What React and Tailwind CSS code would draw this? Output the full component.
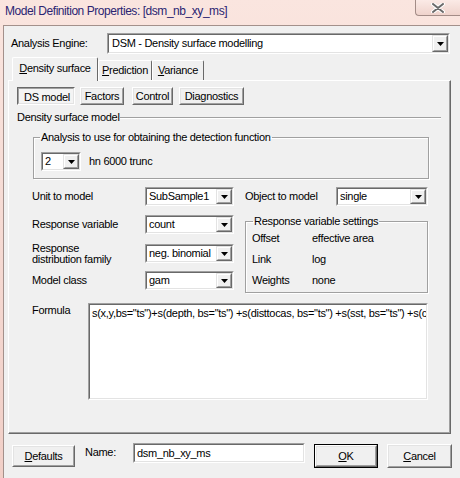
import React from "react";

const Sunken = ({ className = "", inner = "", children }) => (
  <div className={`border border-t-[#a0a0a0] border-l-[#a0a0a0] border-b-white border-r-white ${className}`}>
    <div className={`h-full border border-t-[#696969] border-l-[#696969] border-b-[#e3e3e3] border-r-[#e3e3e3] bg-white ${inner}`}>
      {children}
    </div>
  </div>
);

const Arrow = () => (
  <div className="h-full w-[16px] shrink-0 border border-t-[#e3e3e3] border-l-[#e3e3e3] border-b-[#696969] border-r-[#696969]">
    <div className="h-full border border-t-white border-l-white border-b-[#a0a0a0] border-r-[#a0a0a0] bg-[#f0f0f0] flex items-center justify-center">
      <svg width="7" height="4" viewBox="0 0 7 4">
        <polygon points="0,0 7,0 3.5,4" fill="#000" />
      </svg>
    </div>
  </div>
);

const Select = ({ className = "", value, textClass = "" }) => (
  <Sunken className={className} inner="flex items-stretch">
    <div className={`flex-1 flex items-center pl-[2px] leading-[13px] whitespace-nowrap overflow-hidden ${textClass}`}>{value}</div>
    <Arrow />
  </Sunken>
);

const Btn = ({ className = "", pressed = false, children }) =>
  pressed ? (
    <div className={`border border-t-[#696969] border-l-[#696969] border-b-white border-r-white ${className}`}>
      <div className="h-full border border-t-[#a0a0a0] border-l-[#a0a0a0] border-b-[#e3e3e3] border-r-[#e3e3e3] bg-[#f4f4f4] flex items-center justify-center pt-[2px] pl-[2px] leading-[13px]">
        {children}
      </div>
    </div>
  ) : (
    <div className={`border border-t-white border-l-white border-b-[#696969] border-r-[#696969] ${className}`}>
      <div className="h-full border border-t-[#e3e3e3] border-l-[#e3e3e3] border-b-[#a0a0a0] border-r-[#a0a0a0] bg-[#f0f0f0] flex items-center justify-center leading-[13px]">
        {children}
      </div>
    </div>
  );

export default function App() {
  return (
    <div className="w-[460px] h-[478px] overflow-hidden bg-gradient-to-b from-[#fae5df] to-[#f1cfc7] font-['Liberation_Sans',Arial,sans-serif] text-[11px] tracking-[-0.3px] text-black flex flex-col">
      {/* Title bar */}
      <div className="h-[25px] shrink-0 flex items-start">
        <div className="pl-[5px] pt-[3px] text-[12px] tracking-[-0.45px] leading-[16px] text-[#2b2472] whitespace-nowrap">
          Model Definition Properties: [dsm_nb_xy_ms]
        </div>
        <div className="ml-auto w-[45px] h-[16px] border-l border-b border-[#a38c87] rounded-bl-[4px] bg-gradient-to-b from-[#fbeae6] to-[#efd3cc] flex items-center justify-center">
          <svg width="14" height="10" viewBox="0 0 14 10">
            <path d="M2 1 L12 9 M12 1 L2 9" stroke="#ffffff" strokeWidth="4" strokeLinecap="round" />
            <path d="M2 1 L12 9 M12 1 L2 9" stroke="#6b6b6b" strokeWidth="2" strokeLinecap="round" />
          </svg>
        </div>
      </div>

      {/* Client area */}
      <div className="flex-1 ml-[3px] border-l border-t border-[#a3908b] bg-[#f0f0f0] flex flex-col">
        {/* Analysis engine */}
        <div className="mt-[7px] flex items-center h-[21px]">
          <div className="w-[103px] pl-[7px] leading-[13px]">Analysis Engine:</div>
          <Select className="w-[343px] h-[21px]" value="DSM - Density surface modelling" textClass="pl-[3px]" />
        </div>

        {/* Tab control */}
        <div className="ml-[4px] mt-[3px] w-[443px] flex flex-col">
          <div className="h-[23px] flex items-end pl-[4px]">
            <div className="relative z-10 -mb-px w-[86px] h-[24px] border-t border-l border-white border-r border-r-[#696969] rounded-t-[2px] bg-[#f0f0f0] flex items-center justify-center pb-[2px] leading-[13px]">
              <span><span className="underline">D</span>ensity surface</span>
            </div>
            <div className="w-[54px] h-[20px] border-t border-l border-white border-r border-r-[#696969] rounded-t-[2px] flex items-center justify-center leading-[13px]">
              <span><span className="underline">P</span>rediction</span>
            </div>
            <div className="w-[52px] h-[20px] border-t border-l border-white border-r border-r-[#696969] rounded-t-[2px] flex items-center justify-center leading-[13px]">
              <span><span className="underline">V</span>ariance</span>
            </div>
          </div>

          {/* Pane */}
          <div className="h-[354px] border border-t-white border-l-white border-b-[#696969] border-r-[#696969]">
            <div className="h-full border-r border-b border-[#a0a0a0] flex flex-col pl-[8px]">
              {/* sub buttons */}
              <div className="mt-[6px] flex h-[18px]">
                <Btn pressed className="w-[58px] h-[18px]">DS model</Btn>
                <Btn className="ml-[5px] w-[44px] h-[18px]">Factors</Btn>
                <Btn className="ml-[8px] w-[41px] h-[18px]">Control</Btn>
                <Btn className="ml-[6px] w-[65px] h-[18px]">Diagnostics</Btn>
              </div>

              {/* separator */}
              <div className="mt-[6px] h-[13px] flex items-center mr-[8px]">
                <span className="leading-[13px] whitespace-nowrap">Density surface model</span>
                <div className="flex-1 h-[2px] border-t border-t-[#a0a0a0] border-b border-b-white"></div>
              </div>

              {/* detection function group */}
              <fieldset className="mt-[7px] ml-[16px] w-[396px] border border-[#a0a0a0] px-[6px] pb-[7px] shadow-[inset_1px_1px_0_#ffffff,1px_1px_0_#ffffff]">
                <legend className="px-[1px] leading-[13px]">Analysis to use for obtaining the detection function</legend>
                <div className="mt-[8px] ml-[1px] flex items-center">
                  <Select className="w-[40px] h-[19px]" value="2" />
                  <span className="ml-[8px] leading-[13px]">hn 6000 trunc</span>
                </div>
              </fieldset>

              {/* form */}
              <div className="ml-[15px] flex">
                <div className="w-[202px] flex flex-col">
                  <div className="mt-[8px] flex items-center h-[19px]">
                    <div className="w-[113px] leading-[13px]">Unit to model</div>
                    <Select className="w-[89px] h-[19px]" value="SubSample1" />
                  </div>
                  <div className="mt-[9px] flex items-center h-[19px]">
                    <div className="w-[113px] leading-[13px]">Response variable</div>
                    <Select className="w-[89px] h-[19px]" value="count" />
                  </div>
                  <div className="mt-[10px] flex items-center h-[19px]">
                    <div className="w-[113px] leading-[11px]">Response<br />distribution family</div>
                    <Select className="w-[89px] h-[19px]" value="neg. binomial" />
                  </div>
                  <div className="mt-[8px] flex items-center h-[19px]">
                    <div className="w-[113px] leading-[13px]">Model class</div>
                    <Select className="w-[89px] h-[19px]" value="gam" />
                  </div>
                </div>
                <div className="ml-[11px] w-[183px] flex flex-col">
                  <div className="mt-[8px] flex items-center h-[19px]">
                    <div className="w-[91px] leading-[13px]">Object to model</div>
                    <Select className="w-[92px] h-[19px]" value="single" />
                  </div>
                  <fieldset className="mt-[9px] border border-[#a0a0a0] px-[6px] pb-[1px] shadow-[inset_1px_1px_0_#ffffff,1px_1px_0_#ffffff]">
                    <legend className="ml-[1px] px-[1px] leading-[13px]">Response variable settings</legend>
                    <div className="flex items-center h-[21px]">
                      <div className="w-[60px] leading-[13px]">Offset</div>
                      <div className="leading-[13px]">effective area</div>
                    </div>
                    <div className="flex items-center h-[21px]">
                      <div className="w-[60px] leading-[13px]">Link</div>
                      <div className="leading-[13px]">log</div>
                    </div>
                    <div className="flex items-center h-[21px]">
                      <div className="w-[60px] leading-[13px]">Weights</div>
                      <div className="leading-[13px]">none</div>
                    </div>
                  </fieldset>
                </div>
              </div>

              {/* formula */}
              <div className="mt-[10px] ml-[15px] flex items-start">
                <div className="w-[56px] pt-[1px] leading-[13px]">Formula</div>
                <Sunken className="w-[340px] h-[97px]" inner="overflow-hidden pl-[2px] pt-[2px]">
                  <div className="whitespace-nowrap leading-[13px]">
                    s(x,y,bs="ts")+s(depth, bs="ts") +s(disttocas, bs="ts") +s(sst, bs="ts") +s(chl, bs="ts")
                  </div>
                </Sunken>
              </div>
            </div>
          </div>
        </div>

        {/* bottom row */}
        <div className="mt-[9px] ml-[8px] flex items-start">
          <Btn className="mt-[2px] w-[63px] h-[22px]"><span><span className="underline">D</span>efaults</span></Btn>
          <div className="ml-[10px] mt-[3px] w-[48px] leading-[13px]">Name:</div>
          <Sunken className="w-[172px] h-[20px]" inner="flex items-center pl-[2px]">
            <span className="leading-[13px]">dsm_nb_xy_ms</span>
          </Sunken>
          <div className="ml-[9px] mt-[1px] w-[64px] h-[24px] border border-black">
            <Btn className="w-full h-full"><span><span className="underline">O</span>K</span></Btn>
          </div>
          <Btn className="ml-[9px] mt-[1px] w-[65px] h-[24px]"><span><span className="underline">C</span>ancel</span></Btn>
        </div>
      </div>
    </div>
  );
}
